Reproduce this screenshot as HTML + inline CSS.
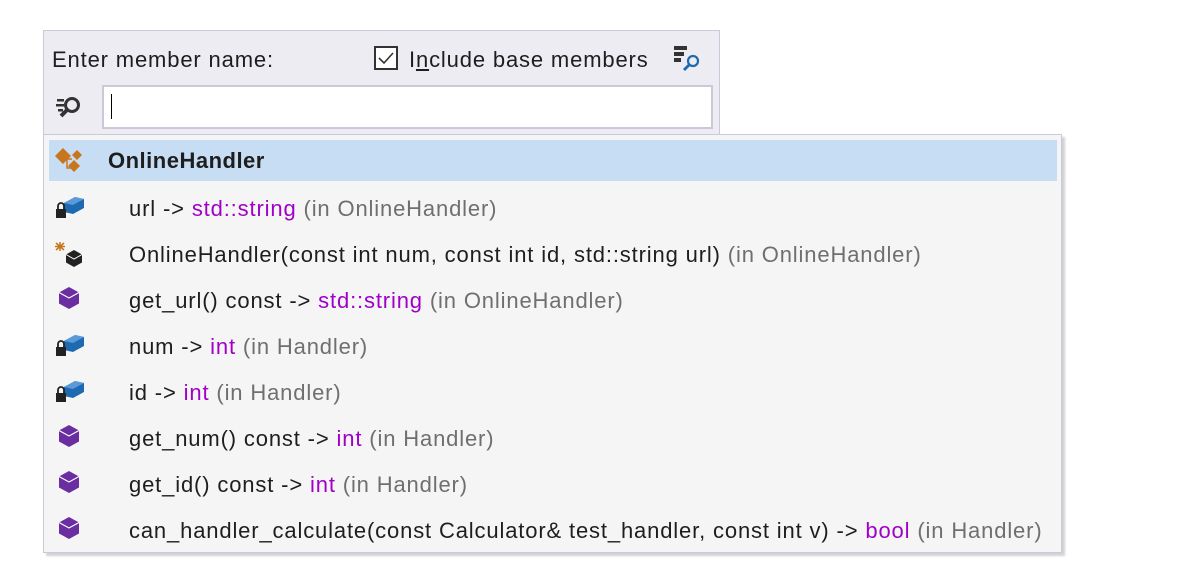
<!DOCTYPE html>
<html><head><meta charset="utf-8"><style>
body{margin:0;width:1200px;height:584px;background:#fff;position:relative;overflow:hidden;font-family:"Liberation Sans",sans-serif;color:#1e1e1e}
.top{position:absolute;left:43px;top:30px;width:675px;height:106px;background:#ececf2;border:1px solid #c9cad9;border-bottom:none}
.pop{position:absolute;left:43px;top:134px;width:1017px;height:417px;background:#f5f5f5;border:1px solid #c9cad9;box-shadow:3px 3px 2px rgba(0,0,0,.18)}
.t{position:absolute;font-size:22px;letter-spacing:0.85px;white-space:nowrap;line-height:24px}
.p{color:#a000c8}.g{color:#6f6f6f}
.hl{position:absolute;left:5px;top:5px;width:1008px;height:41px;background:#c7ddf3}
.ic{position:absolute}
</style></head><body>
<div class="top">
 <div class="t" style="left:8px;top:17px">Enter member name:</div>
 <div style="position:absolute;left:330px;top:15px;width:24px;height:24px;border:2px solid #333;background:#fff;box-sizing:border-box"></div>
 <svg class="ic" style="left:330px;top:15px" width="24" height="24"><path d="M5 12l5 5 9-10" fill="none" stroke="#333" stroke-width="1.6"/></svg>
 <div class="t" style="left:365px;top:17px">I<u>n</u>clude base members</div>
 <svg class="ic" style="left:628px;top:13px" width="34" height="30"><rect x="2" y="2" width="13" height="4" fill="#333"/><rect x="2" y="8" width="10" height="4" fill="#333"/><rect x="2" y="14" width="7" height="4" fill="#333"/><circle cx="21" cy="17" r="5" fill="none" stroke="#1e6ab0" stroke-width="2.2"/><path d="M17 21l-5 5" stroke="#1e6ab0" stroke-width="2.8"/></svg>
 <svg class="ic" style="left:11px;top:63px" width="30" height="30"><rect x="2" y="5" width="7" height="2.5" fill="#333"/><rect x="1" y="10" width="8" height="2.5" fill="#333"/><rect x="3" y="15" width="5" height="2.5" fill="#333"/><circle cx="17" cy="11" r="6.5" fill="none" stroke="#333" stroke-width="3"/><path d="M12 16l-6 6" stroke="#333" stroke-width="4"/></svg>
 <div style="position:absolute;left:58px;top:54px;width:611px;height:44px;background:#fff;border:2px solid #c9cad9;box-sizing:border-box"></div>
 <div style="position:absolute;left:67px;top:63px;width:1px;height:25px;background:#000"></div>
</div>
<div class="pop">
 <div class="hl"></div>
 <svg class="ic" style="left:10px;top:10px" width="32" height="32"><path d="M1 11l8-8 8 8-8 8z" fill="#c8761e"/><path d="M14 21l6-6 6 6-6 6z" fill="#c8761e"/><path d="M18 10l5-5 5 5-5 5z" fill="#c8761e"/><path d="M13 14v9h4M13 14h5" fill="none" stroke="#c8761e" stroke-width="1.5"/></svg>
 <div class="t" style="left:64px;top:14px;font-weight:bold;letter-spacing:0.5px">OnlineHandler</div>

 <svg class="ic" style="left:10px;top:60px" width="32" height="28"><path d="M10 8l11-6 9 2v9l-11 6-9-2z" fill="#1e6ab0"/><path d="M10 8l11-6 9 2-11 6z" fill="#5a9ad8"/><rect x="2" y="14" width="10" height="9" fill="#222"/><path d="M4 14v-3a3 3 0 016 0v3" fill="none" stroke="#222" stroke-width="1.8"/></svg>
 <div class="t" style="left:85px;top:62px">url -&gt; <span class="p">std::string</span> <span class="g">(in OnlineHandler)</span></div>

 <svg class="ic" style="left:10px;top:105px" width="32" height="28"><path d="M6 2v9M1 6.5h10M2 3l8 7M10 3l-8 7" stroke="#c8761e" stroke-width="1.5"/><path d="M20 10l8 4.5v8l-8 4.5-8-4.5v-8z" fill="#222"/><path d="M12 14.5l8 4.5 8-4.5" fill="none" stroke="#fff" stroke-width="1"/></svg>
 <div class="t" style="left:85px;top:108px">OnlineHandler(const int num, const int id, std::string url) <span class="g">(in OnlineHandler)</span></div>

 <svg class="ic" style="left:13px;top:151px" width="26" height="26"><path d="M12 1l10 5.5v11L12 23 2 17.5v-11z" fill="#6a2ea0"/><path d="M2 6.5l10 5.5 10-5.5" fill="none" stroke="#fff" stroke-width="1.2"/></svg>
 <div class="t" style="left:85px;top:154px">get_url() const -&gt; <span class="p">std::string</span> <span class="g">(in OnlineHandler)</span></div>

 <svg class="ic" style="left:10px;top:198px" width="32" height="28"><path d="M10 8l11-6 9 2v9l-11 6-9-2z" fill="#1e6ab0"/><path d="M10 8l11-6 9 2-11 6z" fill="#5a9ad8"/><rect x="2" y="14" width="10" height="9" fill="#222"/><path d="M4 14v-3a3 3 0 016 0v3" fill="none" stroke="#222" stroke-width="1.8"/></svg>
 <div class="t" style="left:85px;top:200px">num -&gt; <span class="p">int</span> <span class="g">(in Handler)</span></div>

 <svg class="ic" style="left:10px;top:244px" width="32" height="28"><path d="M10 8l11-6 9 2v9l-11 6-9-2z" fill="#1e6ab0"/><path d="M10 8l11-6 9 2-11 6z" fill="#5a9ad8"/><rect x="2" y="14" width="10" height="9" fill="#222"/><path d="M4 14v-3a3 3 0 016 0v3" fill="none" stroke="#222" stroke-width="1.8"/></svg>
 <div class="t" style="left:85px;top:246px">id -&gt; <span class="p">int</span> <span class="g">(in Handler)</span></div>

 <svg class="ic" style="left:13px;top:289px" width="26" height="26"><path d="M12 1l10 5.5v11L12 23 2 17.5v-11z" fill="#6a2ea0"/><path d="M2 6.5l10 5.5 10-5.5" fill="none" stroke="#fff" stroke-width="1.2"/></svg>
 <div class="t" style="left:85px;top:292px">get_num() const -&gt; <span class="p">int</span> <span class="g">(in Handler)</span></div>

 <svg class="ic" style="left:13px;top:335px" width="26" height="26"><path d="M12 1l10 5.5v11L12 23 2 17.5v-11z" fill="#6a2ea0"/><path d="M2 6.5l10 5.5 10-5.5" fill="none" stroke="#fff" stroke-width="1.2"/></svg>
 <div class="t" style="left:85px;top:338px">get_id() const -&gt; <span class="p">int</span> <span class="g">(in Handler)</span></div>

 <svg class="ic" style="left:13px;top:381px" width="26" height="26"><path d="M12 1l10 5.5v11L12 23 2 17.5v-11z" fill="#6a2ea0"/><path d="M2 6.5l10 5.5 10-5.5" fill="none" stroke="#fff" stroke-width="1.2"/></svg>
 <div class="t" style="left:85px;top:384px">can_handler_calculate(const Calculator&amp; test_handler, const int v) -&gt; <span class="p">bool</span> <span class="g">(in Handler)</span></div>
</div>
</body></html>
